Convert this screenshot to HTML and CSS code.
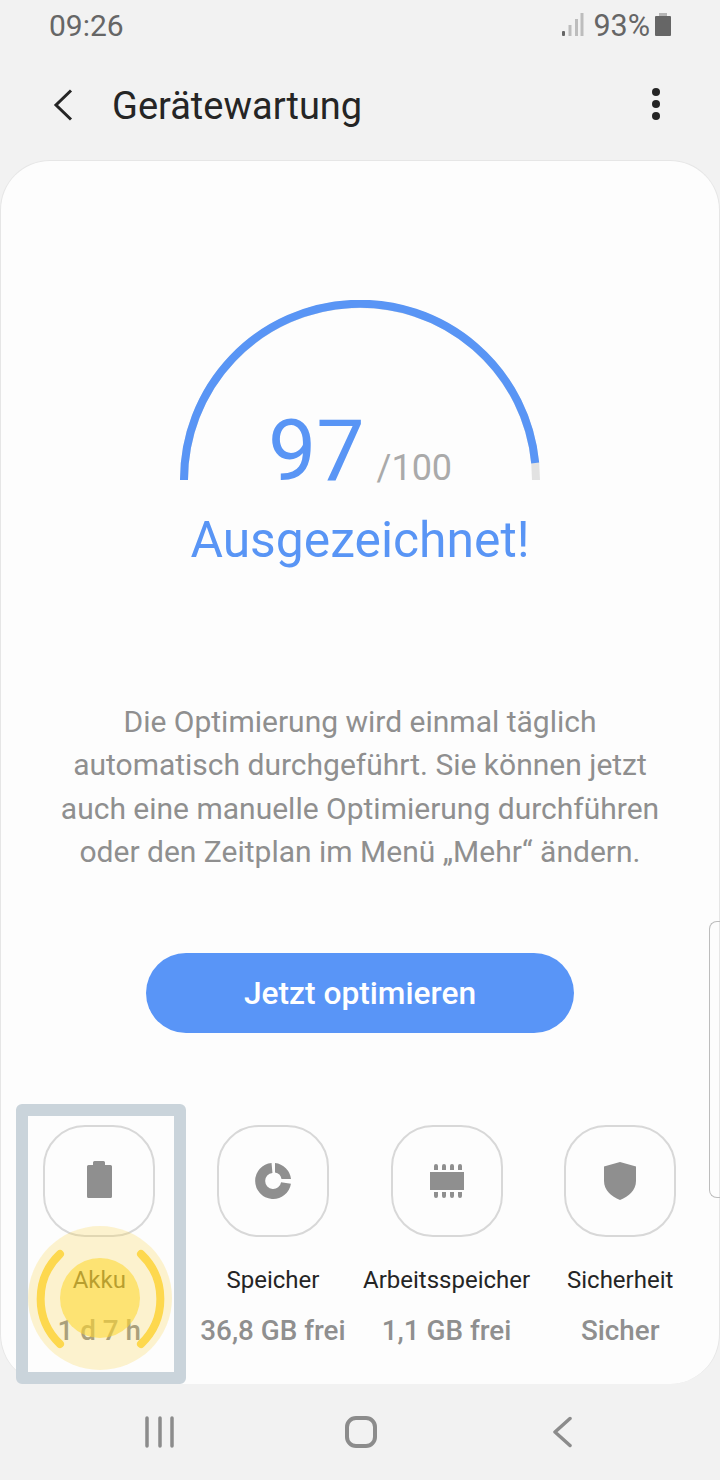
FILE: index.html
```html
<!DOCTYPE html>
<html lang="de">
<head>
<meta charset="utf-8">
<title>Gerätewartung</title>
<link rel="stylesheet" href="styles.css">
</head>
<body>
<div class="screen">
  <div class="status">
    <span class="time">09:26</span>
    <div class="status-right">
      <svg class="signal" width="22" height="24" viewBox="0 0 22 24"><rect x="0" y="18" width="3" height="5" rx="1" fill="#666"/><rect x="6.500" y="12" width="3" height="11" fill="#bdbdbd"/><rect x="13" y="6" width="3" height="17" fill="#bdbdbd"/><rect x="18.500" y="0" width="3" height="23" fill="#bdbdbd"/></svg>
      <span class="pct">93%</span>
      <svg class="batt" width="16" height="24" viewBox="0 0 16 24"><rect x="4" y="0" width="8" height="4" fill="#b5b5b5"/><rect x="0" y="3" width="16" height="20" rx="1" fill="#666"/></svg>
    </div>
  </div>
  <div class="appbar">
    <svg class="back" width="20" height="32" viewBox="0 0 20 32"><path d="M18 1.500L3 16l15 14.500" fill="none" stroke="#252525" stroke-width="3"/></svg>
    <h1 class="title">Gerätewartung</h1>
    <svg class="more" width="8" height="34" viewBox="0 0 8 34"><circle cx="4" cy="4" r="4" fill="#252525"/><circle cx="4" cy="16" r="4" fill="#252525"/><circle cx="4" cy="28" r="4" fill="#252525"/></svg>
  </div>
  <main class="card">
    <div class="gauge">
      <svg class="arc" width="360" height="180" viewBox="0 0 360 180"><path d="M4 180A176 176 0 0 1 356 180" fill="none" stroke="#e2e2e2" stroke-width="8"/><path d="M4 180A176 176 0 0 1 355.200 163" fill="none" stroke="#5995f5" stroke-width="8"/></svg>
      <div class="score"><span class="num">97</span><span class="max">/100</span></div>
    </div>
    <div class="grade">Ausgezeichnet!</div>
    <p class="desc">Die Optimierung wird einmal täglich<br>automatisch durchgeführt. Sie können jetzt<br>auch eine manuelle Optimierung durchführen<br>oder den Zeitplan im Menü „Mehr“ ändern.</p>
    <button class="cta">Jetzt optimieren</button>
    <div class="tiles">
      <div class="tile">
        <div class="tile-icon"><svg width="40" height="40" viewBox="0 0 40 40"><path d="M14 1.500a1.500 1.500 0 0 1 1.500-1.500h9a1.500 1.500 0 0 1 1.500 1.500V4h5.500A1.500 1.500 0 0 1 33 5.500V35.500a1.500 1.500 0 0 1-1.500 1.500h-22A1.500 1.500 0 0 1 8 35.500V5.500A1.500 1.500 0 0 1 9.500 4H14z" fill="#8f8f8f"/></svg></div>
        <div class="tile-name">Akku</div>
        <div class="tile-val">1 d 7 h</div>
      </div>
      <div class="tile">
        <div class="tile-icon"><svg width="40" height="40" viewBox="0 0 40 40"><path d="M19 7A13 13 0 1 0 33 22" fill="none" stroke="#8f8f8f" stroke-width="10"/><path d="M22 2A18 18 0 0 1 38 18H28.500A8 8 0 0 0 22 11.500z" fill="#8f8f8f"/></svg></div>
        <div class="tile-name">Speicher</div>
        <div class="tile-val">36,8 GB frei</div>
      </div>
      <div class="tile">
        <div class="tile-icon"><svg width="40" height="40" viewBox="0 0 40 40" fill="#8f8f8f"><rect x="3" y="11" width="34" height="18"/><path d="M8 9V5a2 2 0 0 1 4 0v4zM16 9V5a2 2 0 0 1 4 0v4zM24 9V5a2 2 0 0 1 4 0v4zM32 9V5a2 2 0 0 1 4 0v4z" transform="translate(-1 0)"/><path d="M8 31h4v4a2 2 0 0 1-4 0zM16 31h4v4a2 2 0 0 1-4 0zM24 31h4v4a2 2 0 0 1-4 0zM32 31h4v4a2 2 0 0 1-4 0z" transform="translate(-1 0)"/></svg></div>
        <div class="tile-name">Arbeitsspeicher</div>
        <div class="tile-val">1,1 GB frei</div>
      </div>
      <div class="tile">
        <div class="tile-icon"><svg width="40" height="40" viewBox="0 0 40 40"><path d="M20 1L36 5.500V20C36 29 29 35.500 20 39 11 35.500 4 29 4 20V5.500z" fill="#8f8f8f"/></svg></div>
        <div class="tile-name">Sicherheit</div>
        <div class="tile-val">Sicher</div>
      </div>
    </div>
    <div class="scroller"></div>
    <div class="mark"></div>
    <svg class="pulse" width="144" height="144" viewBox="0 0 144 144">
      <circle cx="72" cy="72" r="72" fill="#fdd544" fill-opacity=".25"/>
      <circle cx="72" cy="72" r="40" fill="#fdd732" fill-opacity=".58"/>
      <path d="M32 28A62 62 0 0 0 32 118M113 28A62 62 0 0 1 113 118" fill="none" stroke="#fdd84e" stroke-width="8" stroke-linecap="round"/>
    </svg>
  </main>
  <nav class="nav">
    <svg width="30" height="32" viewBox="0 0 30 32"><path d="M2 2V30M15 2V30M27 2V30" stroke="#8c8c8c" stroke-width="3.500" stroke-linecap="round"/></svg>
    <svg width="32" height="32" viewBox="0 0 32 32"><rect x="2" y="2" width="28" height="28" rx="9" fill="none" stroke="#8c8c8c" stroke-width="4"/></svg>
    <svg width="20" height="32" viewBox="0 0 20 32"><path d="M18 2.500L3 16l15 13.500" fill="none" stroke="#8c8c8c" stroke-width="3.500" stroke-linecap="round" stroke-linejoin="round"/></svg>
  </nav>
</div>
</body>
</html>
```
FILE: styles.css
```css
* { box-sizing: border-box; }
html, body { margin: 0; padding: 0; }
body { background: #f2f2f2; font-family: Roboto, sans-serif; }
.screen { width: 720px; height: 1480px; display: flex; flex-direction: column; background: #f2f2f2; overflow: hidden; }

.status { height: 50px; padding: 0 49px 0 49px; display: flex; justify-content: space-between; align-items: center; color: #666; font-size: 30px; }
.status-right { display: flex; align-items: center; }
.signal { margin-right: 9px; }
.pct { font-size: 30.500px; }
.batt { margin-left: 5px; }

.appbar { height: 110px; display: flex; align-items: center; padding: 0 60px 0 53px; }
.back { flex: none; }
.title { flex: 1; margin: 0 0 0 39px; padding-top: 2px; font-size: 38px; font-weight: 400; color: #252525; }

.card { position: relative; height: 1224px; display: flex; flex-direction: column; align-items: center; background: #fdfdfd; border: 1px solid #e6e6e6; border-bottom: 0; border-radius: 50px; padding-top: 139px; }

.gauge { position: relative; width: 360px; height: 180px; display: flex; align-items: flex-end; justify-content: center; flex: none; }
.arc { position: absolute; left: 0; top: 0; }
.score { display: flex; align-items: baseline; margin-bottom: -11px; color: #5995f5; }
.num { font-size: 86px; line-height: 80px; }
.max { font-size: 36px; color: #aaa; margin-left: 12px; }

.grade { margin-top: 30px; font-size: 49.800px; line-height: 60px; color: #5995f5; }

.desc { margin: 130px 0 0; text-align: center; font-size: 30px; line-height: 43.300px; color: #8f8f8f; }

.cta { margin-top: 80px; width: 428px; height: 80px; flex: none; border: 0; border-radius: 40px; padding-top: 2px; background: #5995f7; color: #fff; font: 500 31.700px Roboto, sans-serif; }

.tiles { margin-top: 92px; width: 100%; padding: 0 12px 0 11.500px; display: grid; grid-template-columns: repeat(4, 1fr); }
.tile { display: flex; flex-direction: column; align-items: center; }
.tile-icon { width: 112px; height: 112px; border: 2px solid #d8d8d8; border-radius: 42px; display: flex; align-items: center; justify-content: center; }
.tile-name { margin-top: 28px; font-size: 24px; line-height: 30px; color: #252525; white-space: nowrap; }
.tile-val { margin-top: 20px; font-size: 27.800px; line-height: 32px; font-weight: 500; color: #8f8f8f; white-space: nowrap; }

.scroller { position: absolute; right: -1px; top: 760px; width: 11px; height: 277px; border: 1px solid #bdbdbd; border-right: 0; border-radius: 8px 0 0 8px; }
.mark { position: absolute; left: 15px; top: 943px; width: 170px; height: 280px; border: 12px solid #cad4db; border-radius: 6px; }
.pulse { position: absolute; left: 27px; top: 1065px; }

.nav { height: 96px; display: grid; grid-template-columns: 200px 207px 20px; align-items: center; padding-left: 145px; }
```
